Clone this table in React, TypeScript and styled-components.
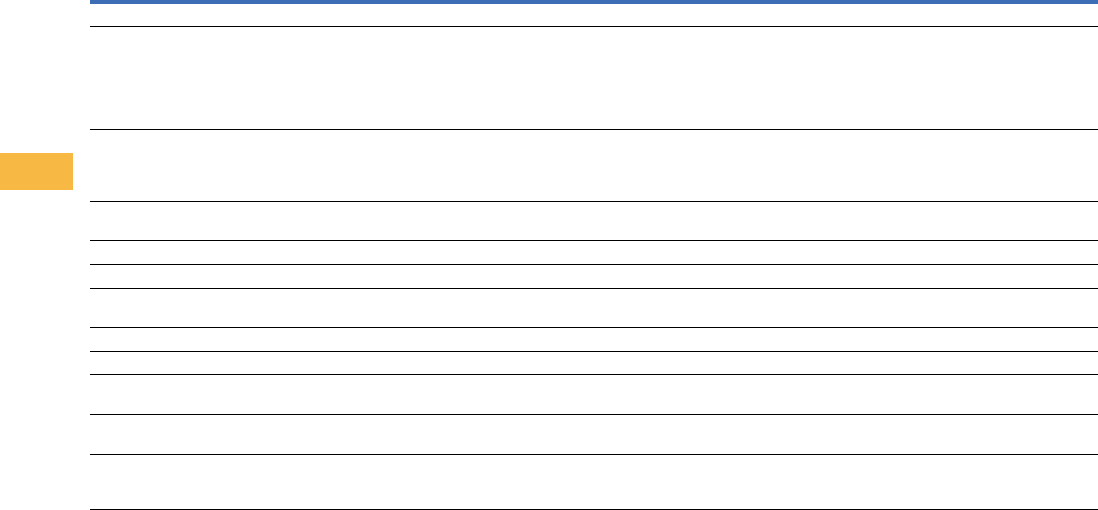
import React from 'react';
import styled, { createGlobalStyle } from 'styled-components';

const GlobalStyle = createGlobalStyle`
	html, body {
		margin: 0;
		padding: 0;
		background: #ffffff;
		font-family: 'Liberation Sans', Arial, sans-serif;
	}
`;

// row heights include the 1px bottom rule
const rows = [23, 103, 72, 39, 24, 24, 39, 24, 23, 40, 40, 55];

const App = () => {
	return (
		<>
			<GlobalStyle />
			<Page>
				<Sidebar>
					<Tab />
				</Sidebar>
				<Content>
					<TopBar />
					<Table>
						{rows.map((h, i) => (
							<Row key={i} $h={h} />
						))}
					</Table>
				</Content>
			</Page>
		</>
	);
};

const Page = styled('div')({
	display: 'flex',
	width: '1098px',
	height: '510px',
	overflow: 'hidden',
});

const Sidebar = styled('aside')({
	width: '90px',
	flexShrink: 0,
	paddingTop: '153px',
	boxSizing: 'border-box',
});

const Tab = styled.div`
	width: 73px;
	height: 37px;
	background: #f7b844;
`;

const Content = styled('main')({
	display: 'flex',
	flexDirection: 'column',
	flex: 1,
});

const TopBar = styled.div`
	height: 4px;
	background: #3d6db5;
`;

const Table = styled('div')({
	display: 'flex',
	flexDirection: 'column',
});

const Row = styled.div<{ $h: number }>`
	height: ${(props) => props.$h}px;
	box-sizing: border-box;
	border-bottom: 1px solid #000000;
`;

export default App;
